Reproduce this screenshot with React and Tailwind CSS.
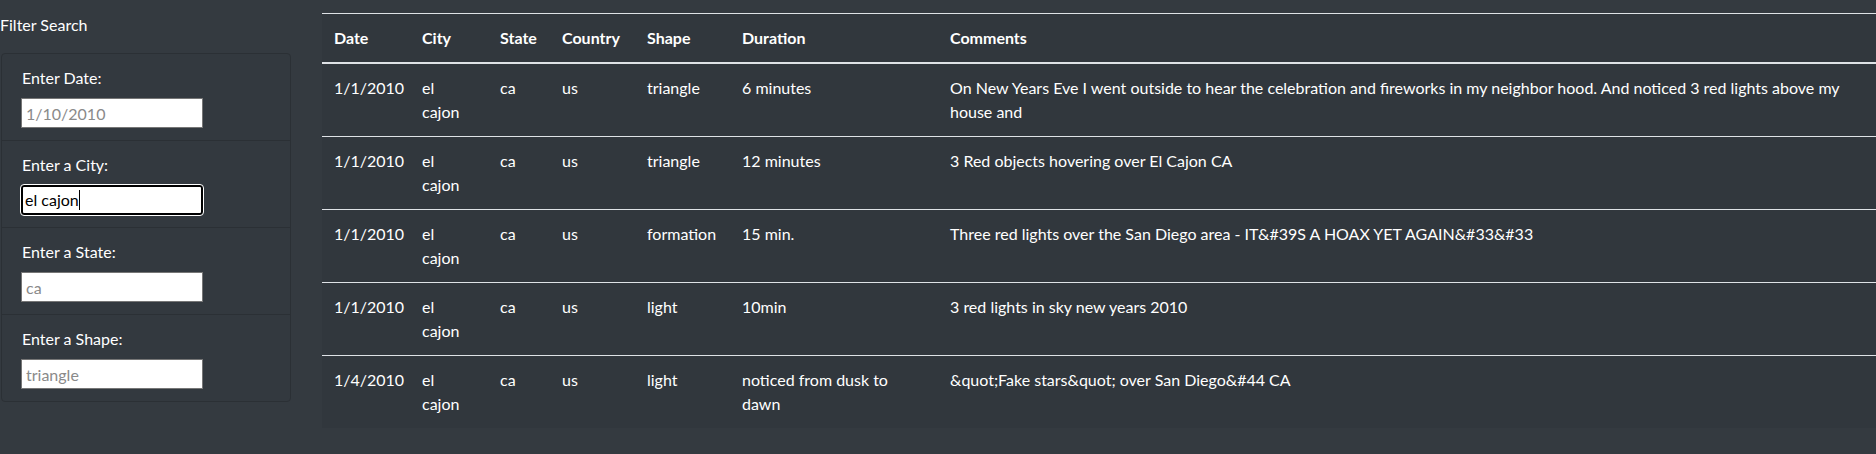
const sightings = [
  { date: '1/1/2010', city: 'el cajon', state: 'ca', country: 'us', shape: 'triangle', duration: '6 minutes', comments: 'On New Years Eve I went outside to hear the celebration and fireworks in my neighbor hood. And noticed 3 red lights above my house and' },
  { date: '1/1/2010', city: 'el cajon', state: 'ca', country: 'us', shape: 'triangle', duration: '12 minutes', comments: '3 Red objects hovering over El Cajon CA' },
  { date: '1/1/2010', city: 'el cajon', state: 'ca', country: 'us', shape: 'formation', duration: '15 min.', comments: 'Three red lights over the San Diego area - IT&#39S A HOAX YET AGAIN&#33&#33' },
  { date: '1/1/2010', city: 'el cajon', state: 'ca', country: 'us', shape: 'light', duration: '10min', comments: '3 red lights in sky new years 2010' },
  { date: '1/4/2010', city: 'el cajon', state: 'ca', country: 'us', shape: 'light', duration: 'noticed from dusk to dawn', comments: '&quot;Fake stars&quot; over San Diego&#44 CA' },
]

const filters = [
  { label: 'Enter Date:', placeholder: '1/10/2010' },
  { label: 'Enter a City:', value: 'el cajon' },
  { label: 'Enter a State:', placeholder: 'ca' },
  { label: 'Enter a Shape:', placeholder: 'triangle' },
]

function Filtro({ label, placeholder, value }) {
  return (
    <li className="px-5 pt-3 pb-3 border-b border-[#2b3035] last:border-b-0">
      <label className="block mb-2 leading-6 text-white">{label}</label>
      {value ? (
        <div className="w-[182px] h-[30px] -ml-px bg-white border-2 border-black rounded-[3px] outline outline-1 outline-white flex items-center px-[2px] text-black leading-none">
          {value}<span className="w-px h-[20px] bg-black inline-block"></span>
        </div>
      ) : (
        <input type="text" placeholder={placeholder}
          className="w-[182px] h-[30px] -ml-px bg-white border border-[#767676] px-[4px] text-black placeholder:text-[#8a8a8a] outline-none" />
      )}
    </li>
  )
}

export default function App() {
  return (
    <div className="min-h-[454px] w-[1876px] bg-[#343a40] text-white flex text-[16px] overflow-hidden" style={{ fontFamily: 'Lato, "Noto Sans", sans-serif' }}>
      <div className="w-[322px] shrink-0">
        <p className="pt-[13px] leading-6 mb-4">Filter Search</p>
        <ul className="ml-px w-[290px] border border-[#2b3035] rounded bg-[#33393f]">
          {filters.map(f => <Filtro key={f.label} {...f} />)}
        </ul>
      </div>

      <div className="flex-1 pt-[13px]">
        <table className="w-[1554px] table-fixed text-left bg-[#31373d] border-collapse leading-6">
          <colgroup>
            <col className="w-[88px]" />
            <col className="w-[78px]" />
            <col className="w-[62px]" />
            <col className="w-[85px]" />
            <col className="w-[95px]" />
            <col className="w-[208px]" />
            <col />
          </colgroup>
          <thead>
            <tr className="border-t border-[#dee2e6] border-b-2 border-b-[#dee2e6]">
              {['Date', 'City', 'State', 'Country', 'Shape', 'Duration', 'Comments'].map(h => (
                <th key={h} className="px-3 py-3 font-bold whitespace-nowrap">{h}</th>
              ))}
            </tr>
          </thead>
          <tbody>
            {sightings.map((s, i) => (
              <tr key={i} className="border-t border-[#dee2e6] first:border-t-0 align-top">
                <td className="px-3 py-3 whitespace-nowrap">{s.date}</td>
                <td className="px-3 py-3"><div className="max-w-[45px]">{s.city}</div></td>
                <td className="px-3 py-3">{s.state}</td>
                <td className="px-3 py-3">{s.country}</td>
                <td className="px-3 py-3">{s.shape}</td>
                <td className="px-3 py-3"><div className="max-w-[150px]">{s.duration}</div></td>
                <td className="px-3 py-3 h-[72px]">{s.comments}</td>
              </tr>
            ))}
          </tbody>
        </table>
      </div>
    </div>
  )
}
